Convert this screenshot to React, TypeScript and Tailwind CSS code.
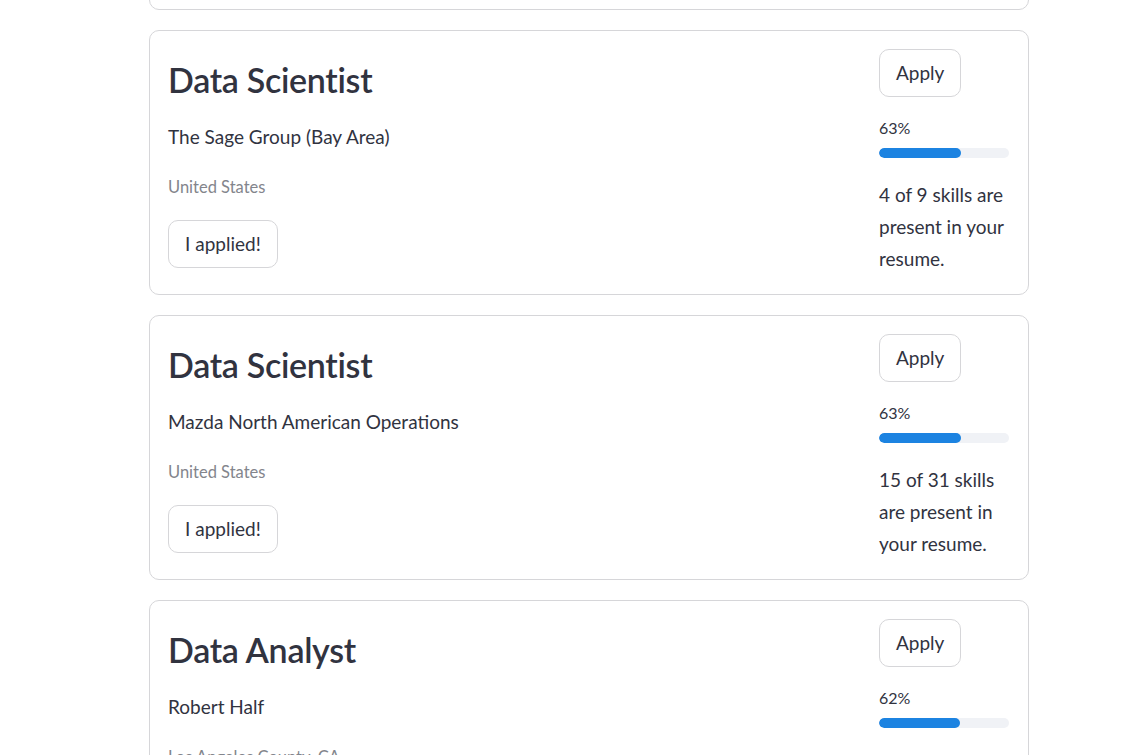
import { useState } from "react";

type Job = {
  id: number;
  title: string;
  company: string;
  location: string;
  match: number;
  skills: string;
};

const jobs: Job[] = [
  {
    id: 1,
    title: "Data Scientist",
    company: "Stripe",
    location: "United States",
    match: 64,
    skills: "7 of 11 skills are present in your resume.",
  },
  {
    id: 2,
    title: "Data Scientist",
    company: "The Sage Group (Bay Area)",
    location: "United States",
    match: 63,
    skills: "4 of 9 skills are present in your resume.",
  },
  {
    id: 3,
    title: "Data Scientist",
    company: "Mazda North American Operations",
    location: "United States",
    match: 63,
    skills: "15 of 31 skills are present in your resume.",
  },
  {
    id: 4,
    title: "Data Analyst",
    company: "Robert Half",
    location: "Los Angeles County, CA",
    match: 62,
    skills: "8 of 13 skills are present in your resume.",
  },
];

function JobCard({ job }: { job: Job }) {
  const [applied, setApplied] = useState(false);

  return (
    <div className="flex gap-5 border border-[#d6d6d9] rounded-[10px] pl-[18px] pr-[19px] pt-[18px] pb-[19px]">
      {/* Lado izquierdo: puesto y empresa */}
      <div className="flex-1 flex flex-col items-start">
        <h3 className="mt-[10px] text-[34px] leading-[42px] font-semibold tracking-[-0.3px] text-[#31333f]">
          {job.title}
        </h3>
        <p className="mt-5 text-[19px] leading-[32px] text-[#31333f]">{job.company}</p>
        <p className="mt-5 text-[16.5px] leading-[28px] text-[#83858c]">{job.location}</p>
        <button
          onClick={() => setApplied(!applied)}
          className="mt-[19px] h-[48px] px-[16px] border border-[#d6d6d9] rounded-[10px] bg-white text-[19px] text-[#31333f]"
        >
          I applied!
        </button>
      </div>

      {/* Lado derecho: match */}
      <div className="w-[130px] shrink-0 flex flex-col items-start">
        <button className="h-[48px] px-[16px] border border-[#d6d6d9] rounded-[10px] bg-white text-[19px] text-[#31333f]">
          Apply
        </button>
        <p className="mt-[19px] text-[16px] leading-[24px] text-[#31333f]">{job.match}%</p>
        <div className="mt-2 h-[10px] w-full rounded-full bg-[#f0f2f6] overflow-hidden">
          <div className="h-full rounded-full bg-[#1c83e1]" style={{ width: `${job.match}%` }} />
        </div>
        <p className="mt-[21px] text-[19px] leading-[32px] text-[#31333f]">{job.skills}</p>
      </div>
    </div>
  );
}

export default function App() {
  return (
    <div
      className="h-[755px] overflow-hidden bg-white"
      style={{ fontFamily: "Lato, 'Liberation Sans', sans-serif" }}
    >
      <div className="ml-[149px] w-[880px] mt-[-255px] flex flex-col gap-5">
        {jobs.map((job) => (
          <JobCard key={job.id} job={job} />
        ))}
      </div>
    </div>
  );
}
